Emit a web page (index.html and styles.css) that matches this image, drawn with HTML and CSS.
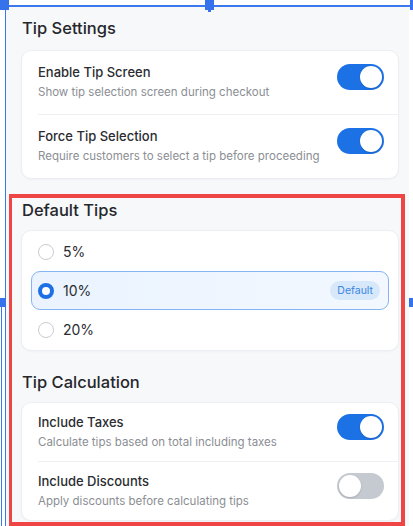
FILE: index.html
```html
<!DOCTYPE html>
<html lang="en">
<head>
<meta charset="utf-8">
<title>Tip Settings</title>
<link rel="stylesheet" href="styles.css">
</head>
<body>
<main class="frame">
  <section class="section">
    <h2 class="section-title first">Tip Settings</h2>
    <div class="card">
      <div class="row">
        <div class="row-text">
          <div class="row-title">Enable Tip Screen</div>
          <div class="row-sub">Show tip selection screen during checkout</div>
        </div>
        <span class="toggle on"><span class="knob"></span></span>
      </div>
      <div class="row">
        <div class="row-text">
          <div class="row-title">Force Tip Selection</div>
          <div class="row-sub">Require customers to select a tip before proceeding</div>
        </div>
        <span class="toggle on"><span class="knob"></span></span>
      </div>
    </div>
  </section>

  <section class="section">
    <h2 class="section-title">Default Tips</h2>
    <div class="card options">
      <div class="option">
        <span class="radio"></span>
        <span class="option-label">5%</span>
      </div>
      <div class="option selected">
        <span class="radio checked"></span>
        <span class="option-label">10%</span>
        <span class="badge">Default</span>
      </div>
      <div class="option">
        <span class="radio"></span>
        <span class="option-label">20%</span>
      </div>
    </div>
  </section>

  <section class="section">
    <h2 class="section-title">Tip Calculation</h2>
    <div class="card compact">
      <div class="row">
        <div class="row-text">
          <div class="row-title">Include Taxes</div>
          <div class="row-sub">Calculate tips based on total including taxes</div>
        </div>
        <span class="toggle on"><span class="knob"></span></span>
      </div>
      <div class="row">
        <div class="row-text">
          <div class="row-title">Include Discounts</div>
          <div class="row-sub">Apply discounts before calculating tips</div>
        </div>
        <span class="toggle off"><span class="knob"></span></span>
      </div>
    </div>
  </section>
</main>

<div class="highlight-box"></div>
<div class="sel-line sel-top"></div>
<div class="sel-line sel-left"></div>
<div class="sel-line sel-left2"></div>
<div class="handle h-tl"></div>
<div class="handle h-tm"></div>
<div class="handle h-tr"></div>
<div class="handle h-ml"></div>
<div class="handle h-mr"></div>
</body>
</html>
```

FILE: styles.css
```css
html, body {
  margin: 0;
  padding: 0;
  overflow: hidden;
  background: #ffffff;
}

body {
  font-family: Inter, "Noto Sans", "DejaVu Sans", sans-serif;
  color: #26282c;
  -webkit-font-smoothing: antialiased;
}

.frame {
  display: block;
  margin: 7px 4px 0 6px;
  padding: 10px 10px 60px 15px;
  background: #f7f8fa;
  min-height: 600px;
}

.section + .section {
  margin-top: 20px;
}

.section-title {
  margin: 0 0 9px 1px;
  font-size: 16.5px;
  line-height: 22px;
  font-weight: 550;
  color: #25272b;
}

.section-title.first {
  margin-bottom: 11px;
}

.card {
  background: #ffffff;
  border: 1px solid #eceef1;
  border-radius: 10px;
  box-shadow: 0 1px 2px rgba(20, 30, 50, 0.03);
}

.row {
  display: flex;
  align-items: flex-start;
  justify-content: space-between;
  padding: 12px 14px 14px 16px;
}

.row + .row {
  margin-left: 16px;
  padding-left: 0;
  border-top: 1px solid #eeeff2;
}

.compact .row {
  padding-top: 10px;
  padding-bottom: 11px;
}

.row-title {
  font-size: 13px;
  line-height: 18px;
  font-weight: 500;
  color: #2a2c30;
}

.row-sub {
  margin-top: 3px;
  font-size: 11.5px;
  line-height: 16px;
  color: #8b8e94;
}

.toggle {
  flex: none;
  display: flex;
  align-items: center;
  width: 47px;
  height: 26px;
  padding: 2px;
  box-sizing: border-box;
  border-radius: 13px;
  margin-top: 1px;
}

.toggle.on {
  background: #1c72e5;
  justify-content: flex-end;
}

.toggle.off {
  background: #c5c9d0;
  justify-content: flex-start;
}

.knob {
  width: 22px;
  height: 22px;
  border-radius: 50%;
  background: #ffffff;
  box-shadow: 0 1px 2px rgba(0, 0, 0, 0.15);
}

.options {
  padding: 1px 9px;
}

.option {
  display: flex;
  align-items: center;
  height: 39px;
  box-sizing: border-box;
  padding: 0 8px 0 6px;
  border: 1px solid transparent;
  border-radius: 9px;
}

.option.selected {
  background: linear-gradient(90deg, #eaf3ff 0%, #f3f8ff 100%);
  border-color: #86b4f2;
}

.radio {
  flex: none;
  width: 16px;
  height: 16px;
  box-sizing: border-box;
  border-radius: 50%;
  border: 1.5px solid #c9ccd2;
  background: #ffffff;
}

.radio.checked {
  border: 4.5px solid #1c72e5;
}

.option-label {
  margin-left: 9px;
  font-size: 14px;
  line-height: 18px;
  color: #2a2c30;
}

.badge {
  margin-left: auto;
  height: 19px;
  line-height: 19px;
  padding: 0 7px;
  border-radius: 10px;
  background: #d7e8fb;
  color: #3a85df;
  font-size: 10.5px;
  font-weight: 400;
}

/* design-tool overlays */
.highlight-box {
  position: absolute;
  left: 9px;
  top: 194px;
  width: 396px;
  height: 332px;
  box-sizing: border-box;
  border: 4px solid #f04545;
  border-left-width: 3px;
  pointer-events: none;
}

.sel-line {
  position: absolute;
  background: #3a78ee;
}

.sel-top {
  left: 9px;
  top: 5px;
  width: 401px;
  height: 2px;
}

.sel-left {
  left: 5px;
  top: 6px;
  width: 1px;
  height: 520px;
}

.sel-left2 {
  left: 1px;
  top: 307px;
  width: 1px;
  height: 219px;
}

.handle {
  position: absolute;
  background: #3572ec;
}

.h-tl {
  left: 0;
  top: 0;
  width: 9px;
  height: 10px;
}

.h-tm {
  left: 205px;
  top: 0;
  width: 9px;
  height: 10px;
}

.h-tm::after {
  content: "";
  position: absolute;
  left: 3px;
  top: 10px;
  width: 3px;
  height: 2px;
  background: #3572ec;
}

.h-tr {
  left: 410px;
  top: 0;
  width: 9px;
  height: 10px;
}

.h-ml {
  left: 0;
  top: 298px;
  width: 6px;
  height: 9px;
}

.h-mr {
  left: 409px;
  top: 298px;
  width: 6px;
  height: 9px;
}
```
